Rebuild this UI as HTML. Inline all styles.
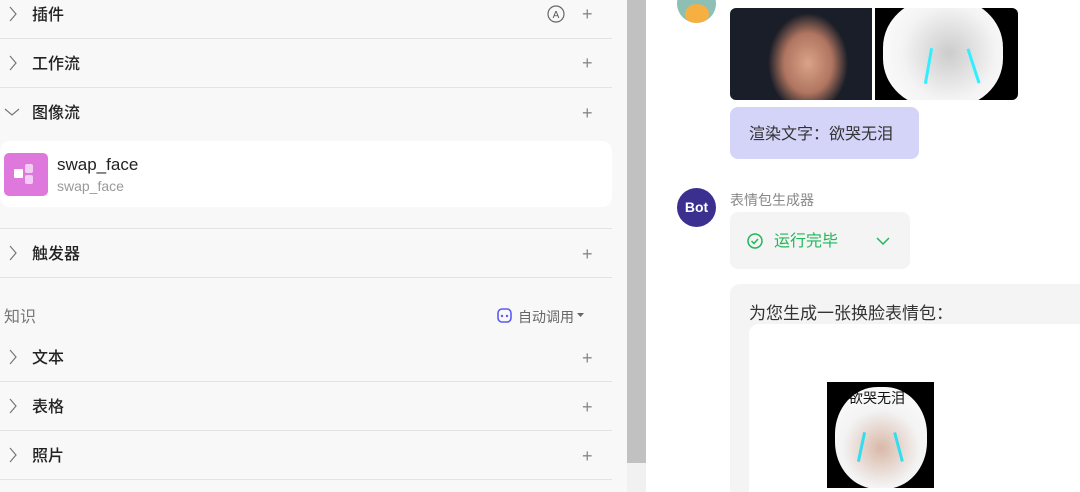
<!DOCTYPE html>
<html><head><meta charset="utf-8"><style>
*{margin:0;padding:0;box-sizing:border-box}
html{width:1080px;height:492px;overflow:hidden}
body{width:1080px;height:492px;overflow:hidden;position:relative;background:#fff;font-family:"Liberation Sans","Noto Sans CJK SC",sans-serif}
.abs{position:absolute}
.left{left:0;top:0;width:627px;height:492px;background:#f8f8f8}
.row{position:absolute;left:0;width:612px;height:49px}
.row .t{position:absolute;left:32px;font-size:16px;color:#222;font-weight:500;line-height:20px}
.chev{position:absolute;left:8px}
.plus{position:absolute;left:582px;font-size:18px;color:#888;font-weight:300;line-height:20px}
.hr{position:absolute;left:0;width:612px;height:1px;background:#e3e3e3}
</style></head><body>
<div class="abs left"></div>
<div class="row" style="top:-10px"><svg class="chev" style="top:16px" width="10" height="16"><path d="M2 1l6 7-6 7" fill="none" stroke="#777" stroke-width="1.2"/></svg><span class="t" style="top:16px">插件</span>
<svg class="abs" style="left:547px;top:15px" width="18" height="18"><circle cx="9" cy="9" r="8" fill="none" stroke="#666" stroke-width="1.2"/><text x="9" y="13" font-size="10" text-anchor="middle" fill="#555" font-family="Liberation Sans">A</text></svg><span class="plus" style="top:14px">+</span></div>
<div class="hr" style="top:38px"></div>
<div class="row" style="top:39px"><svg class="chev" style="top:16px" width="10" height="16"><path d="M2 1l6 7-6 7" fill="none" stroke="#777" stroke-width="1.2"/></svg><span class="t" style="top:16px">工作流</span><span class="plus" style="top:14px">+</span></div>
<div class="hr" style="top:87px"></div>
<div class="row" style="top:88px"><svg class="abs" style="left:4px;top:19px" width="16" height="10"><path d="M1 2l7 6 7-6" fill="none" stroke="#777" stroke-width="1.2"/></svg><span class="t" style="top:16px">图像流</span><span class="plus" style="top:15px">+</span></div>
<div class="abs" style="left:0;top:141px;width:612px;height:66px;background:#fff;border-radius:10px"></div>
<div class="abs" style="left:4px;top:153px;width:44px;height:43px;background:#de78dd;border-radius:5px"><div class="abs" style="left:10px;top:16px;width:9px;height:9px;background:#fff;border-radius:1px"></div><div class="abs" style="left:21px;top:11px;width:8px;height:9px;background:#f3cdf3;border-radius:2px"></div><div class="abs" style="left:21px;top:22px;width:8px;height:9px;background:#f3cdf3;border-radius:2px"></div></div>
<div class="abs" style="left:57px;top:155px;font-size:17px;color:#222">swap_face</div>
<div class="abs" style="left:57px;top:178px;font-size:14px;color:#999">swap_face</div>
<div class="hr" style="top:228px"></div>
<div class="row" style="top:229px"><svg class="chev" style="top:16px" width="10" height="16"><path d="M2 1l6 7-6 7" fill="none" stroke="#777" stroke-width="1.2"/></svg><span class="t" style="top:16px">触发器</span><span class="plus" style="top:15px">+</span></div>
<div class="hr" style="top:277px"></div>
<div class="abs" style="left:4px;top:308px;font-size:16px;color:#777;line-height:20px">知识</div>
<svg class="abs" style="left:496px;top:307px" width="18" height="18"><rect x="2" y="2" width="13" height="13" rx="4" fill="none" stroke="#5b5bf0" stroke-width="1.6"/><circle cx="6" cy="9" r="1.2" fill="#5b5bf0"/><circle cx="11" cy="9" r="1.2" fill="#5b5bf0"/></svg>
<div class="abs" style="left:518px;top:308px;font-size:14px;color:#666;line-height:18px">自动调用</div>
<svg class="abs" style="left:577px;top:313px" width="8" height="6"><path d="M0 0h7l-3.5 4z" fill="#666"/></svg>
<div class="row" style="top:333px"><svg class="chev" style="top:16px" width="10" height="16"><path d="M2 1l6 7-6 7" fill="none" stroke="#777" stroke-width="1.2"/></svg><span class="t" style="top:16px">文本</span><span class="plus" style="top:15px">+</span></div>
<div class="hr" style="top:381px"></div>
<div class="row" style="top:382px"><svg class="chev" style="top:16px" width="10" height="16"><path d="M2 1l6 7-6 7" fill="none" stroke="#777" stroke-width="1.2"/></svg><span class="t" style="top:16px">表格</span><span class="plus" style="top:15px">+</span></div>
<div class="hr" style="top:430px"></div>
<div class="row" style="top:431px"><svg class="chev" style="top:16px" width="10" height="16"><path d="M2 1l6 7-6 7" fill="none" stroke="#777" stroke-width="1.2"/></svg><span class="t" style="top:16px">照片</span><span class="plus" style="top:15px">+</span></div>
<div class="hr" style="top:479px"></div>
<div class="abs" style="left:627px;top:0;width:19px;height:492px;background:#f1f1f1"></div>
<div class="abs" style="left:627px;top:0;width:19px;height:463px;background:#c1c1c1"></div>
<div class="abs" style="left:677px;top:-16px;width:39px;height:39px;border-radius:50%;background:#8dbfb5;overflow:hidden"><div class="abs" style="left:8px;top:20px;width:24px;height:20px;border-radius:50%;background:#f5b041"></div></div>
<div class="abs" style="left:730px;top:8px;width:142px;height:92px;border-radius:6px 0 0 6px;background:radial-gradient(ellipse 40px 50px at 55% 60%,#d9a488,#b07560 60%,#1a1e28 100%)"></div>
<div class="abs" style="left:875px;top:8px;width:143px;height:92px;background:#000;border-radius:0 6px 6px 0;overflow:hidden"><div class="abs" style="left:8px;top:-10px;width:120px;height:110px;border-radius:45%;background:radial-gradient(circle at 55% 50%,#ccc,#f4f4f4 55%,#fff)"></div><div class="abs" style="left:52px;top:40px;width:3px;height:36px;background:#3ef;transform:rotate(10deg)"></div><div class="abs" style="left:97px;top:40px;width:3px;height:36px;background:#3ef;transform:rotate(-18deg)"></div></div>
<div class="abs" style="left:730px;top:107px;width:189px;height:52px;border-radius:8px;background:#d4d3f8"></div>
<div class="abs" style="left:749px;top:125px;font-size:16px;color:#333;line-height:20px">渲染文字：欲哭无泪</div>
<div class="abs" style="left:677px;top:188px;width:39px;height:39px;border-radius:50%;background:#3b2f8f;color:#fff;font-weight:bold;font-size:14px;text-align:center;line-height:39px">Bot</div>
<div class="abs" style="left:730px;top:191px;font-size:14px;color:#888;line-height:18px">表情包生成器</div>
<div class="abs" style="left:730px;top:212px;width:180px;height:57px;border-radius:8px;background:#f4f4f4"></div>
<svg class="abs" style="left:747px;top:233px" width="18" height="18"><circle cx="8" cy="8" r="7" fill="none" stroke="#1fb85a" stroke-width="1.5"/><path d="M4.5 8l2.5 2.5 4-4.5" fill="none" stroke="#1fb85a" stroke-width="1.5"/></svg>
<div class="abs" style="left:774px;top:232px;font-size:16px;color:#1fb85a;line-height:20px">运行完毕</div>
<svg class="abs" style="left:876px;top:237px" width="14" height="9"><path d="M1 1l6 6 6-6" fill="none" stroke="#1fb85a" stroke-width="1.5"/></svg>
<div class="abs" style="left:730px;top:284px;width:360px;height:208px;border-radius:10px 0 0 0;background:#f4f4f4"></div>
<div class="abs" style="left:749px;top:304px;font-size:17px;color:#333;line-height:20px">为您生成一张换脸表情包：</div>
<div class="abs" style="left:749px;top:324px;width:340px;height:168px;border-radius:10px 0 0 0;background:#fff"></div>
<div class="abs" style="left:827px;top:382px;width:107px;height:106px;background:#000;overflow:hidden"><div class="abs" style="left:8px;top:5px;width:92px;height:102px;border-radius:46%;background:radial-gradient(circle at 50% 60%,#d9b8a8,#f3f3f3 50%,#fff)"></div><div class="abs" style="left:33px;top:50px;width:3px;height:30px;background:#3de;transform:rotate(12deg)"></div><div class="abs" style="left:70px;top:50px;width:3px;height:30px;background:#3de;transform:rotate(-15deg)"></div><div class="abs" style="left:22px;top:7px;font-size:14px;color:#111;line-height:18px">欲哭无泪</div></div>
</body></html>
